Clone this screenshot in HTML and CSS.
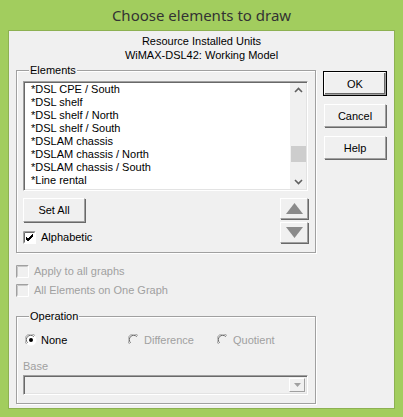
FILE: index.html
```html
<!DOCTYPE html>
<html>
<head>
  <title>Choose elements to draw</title>
  <link rel="stylesheet" href="styles.css">
</head>
<body>
  <div class="window">
    <div class="titlebar">Choose elements to draw</div>
    <div class="client">
      <div class="header">
        <div>Resource Installed Units</div>
        <div>WiMAX-DSL42: Working Model</div>
      </div>

      <div class="main">
        <div class="left">
          <fieldset class="group elements">
            <legend>Elements</legend>
            <div class="listbox">
              <ul class="items">
                <li>*DSL CPE / South</li>
                <li>*DSL shelf</li>
                <li>*DSL shelf / North</li>
                <li>*DSL shelf / South</li>
                <li>*DSLAM chassis</li>
                <li>*DSLAM chassis / North</li>
                <li>*DSLAM chassis / South</li>
                <li>*Line rental</li>
              </ul>
              <div class="scrollbar">
                <svg class="chev" width="15" height="14" viewBox="0 0 15 14"><path d="M4 8 L7.5 4.5 L11 8" fill="none" stroke="#606060" stroke-width="1.6"/></svg>
                <div class="track"><div class="thumb"></div></div>
                <svg class="chev" width="15" height="14" viewBox="0 0 15 14"><path d="M4 5 L7.5 8.5 L11 5" fill="none" stroke="#606060" stroke-width="1.6"/></svg>
              </div>
            </div>

            <div class="list-actions">
              <div class="actions-left">
                <button class="btn setall">Set All</button>
                <label class="check">
                  <svg class="box" width="13" height="13" viewBox="0 0 13 13">
                    <rect x="0" y="0" width="13" height="13" fill="#fff"/>
                    <path d="M0.5 12.5 V0.5 H12.5" fill="none" stroke="#a0a0a0"/>
                    <path d="M1.5 11.5 V1.5 H11.5" fill="none" stroke="#696969"/>
                    <path d="M1.5 12.5 H12.5 V0.5" fill="none" stroke="#fff"/>
                    <path d="M3 6 L5 8 L10 3 M3 7 L5 9 L10 4 M3 8 L5 10 L10 5" fill="none" stroke="#000"/>
                  </svg>
                  <span>Alphabetic</span>
                </label>
              </div>
              <div class="movers">
                <button class="btn mover">
                  <svg width="17" height="12" viewBox="0 0 17 12"><polygon points="8.5,0 17,11 0,11" fill="#8a8a8a"/></svg>
                </button>
                <button class="btn mover">
                  <svg width="17" height="12" viewBox="0 0 17 12"><polygon points="0,0 17,0 8.5,11" fill="#8a8a8a"/></svg>
                </button>
              </div>
            </div>
          </fieldset>

          <label class="check disabled first">
            <svg class="box" width="13" height="13" viewBox="0 0 13 13">
              <rect x="0" y="0" width="13" height="13" fill="#f0f0f0"/>
              <path d="M0.5 12.5 V0.5 H12.5" fill="none" stroke="#a0a0a0"/>
              <path d="M1.5 11.5 V1.5 H11.5" fill="none" stroke="#c8c8c8"/>
              <path d="M1.5 12.5 H12.5 V0.5" fill="none" stroke="#fff"/>
            </svg>
            <span>Apply to all graphs</span>
          </label>
          <label class="check disabled">
            <svg class="box" width="13" height="13" viewBox="0 0 13 13">
              <rect x="0" y="0" width="13" height="13" fill="#f0f0f0"/>
              <path d="M0.5 12.5 V0.5 H12.5" fill="none" stroke="#a0a0a0"/>
              <path d="M1.5 11.5 V1.5 H11.5" fill="none" stroke="#c8c8c8"/>
              <path d="M1.5 12.5 H12.5 V0.5" fill="none" stroke="#fff"/>
            </svg>
            <span>All Elements on One Graph</span>
          </label>

          <fieldset class="group operation">
            <legend>Operation</legend>
            <div class="radios">
              <label class="radio r-none">
                <svg width="12" height="12" viewBox="0 0 12 12">
                  <circle cx="6" cy="6" r="5.5" fill="#fff"/>
                  <path d="M1.6 10 A5.5 5.5 0 0 1 10 1.6" fill="none" stroke="#a0a0a0"/>
                  <path d="M2.6 8.8 A4.3 4.3 0 0 1 8.8 2.6" fill="none" stroke="#696969"/>
                  <circle cx="6" cy="6" r="2" fill="#000"/>
                </svg>
                <span>None</span>
              </label>
              <label class="radio disabled r-diff">
                <svg width="12" height="12" viewBox="0 0 12 12">
                  <circle cx="6" cy="6" r="5.5" fill="#f0f0f0"/>
                  <path d="M1.6 10 A5.5 5.5 0 0 1 10 1.6" fill="none" stroke="#a0a0a0"/>
                  <path d="M2.6 8.8 A4.3 4.3 0 0 1 8.8 2.6" fill="none" stroke="#696969"/>
                </svg>
                <span>Difference</span>
              </label>
              <label class="radio disabled">
                <svg width="12" height="12" viewBox="0 0 12 12">
                  <circle cx="6" cy="6" r="5.5" fill="#f0f0f0"/>
                  <path d="M1.6 10 A5.5 5.5 0 0 1 10 1.6" fill="none" stroke="#a0a0a0"/>
                  <path d="M2.6 8.8 A4.3 4.3 0 0 1 8.8 2.6" fill="none" stroke="#696969"/>
                </svg>
                <span>Quotient</span>
              </label>
            </div>
            <div class="base-label">Base</div>
            <div class="combo">
              <div class="combo-btn">
                <svg width="7" height="4" viewBox="0 0 7 4"><polygon points="0,0 7,0 3.5,4" fill="#a0a0a0"/></svg>
              </div>
            </div>
          </fieldset>
        </div>

        <div class="right">
          <button class="btn default">OK</button>
          <button class="btn">Cancel</button>
          <button class="btn">Help</button>
        </div>
      </div>
    </div>
  </div>
</body>
</html>
```

FILE: styles.css
```css
/* dialog frame */

body {
  margin: 0;
  background: #a2cd5e;
}

.window {
  width: 403px;
  height: 417px;
  background: #a2cd5e;
  font-family: "Liberation Sans", Arial, sans-serif;
  font-size: 11px;
  color: #000;
}

.titlebar {
  height: 30px;
  line-height: 30px;
  text-align: center;
  font-family: "Noto Sans", "Open Sans", sans-serif;
  font-size: 15px;
  color: #333;
}

.client {
  box-sizing: border-box;
  margin: 0 8px;
  height: 379px;
  background: #f0f0f0;
  border: 1px solid #8db152;
}

.header {
  margin-top: 3px;
  text-align: center;
  line-height: 14px;
}

.main {
  display: flex;
  gap: 8px;
  margin-left: 7px;
  margin-top: 1px;
}

.left {
  width: 300px;
}

.right {
  width: 63px;
  margin-top: 9px;
  display: flex;
  flex-direction: column;
  gap: 9px;
}

/* group boxes */

.group {
  margin: 0;
  min-inline-size: 0;
  border: 1px solid #a0a0a0;
  box-shadow: inset 1px 1px 0 #fff, 1px 1px 0 #fff;
}

.group legend {
  padding: 0 1px;
  margin-left: 6px;
  line-height: 14px;
  background: #f0f0f0;
}

.elements {
  padding: 4px 7px 8px 6px;
}

.operation {
  margin-top: 12px;
  padding: 11px 7px 8px 6px;
}

/* list */

.listbox {
  display: flex;
  height: 110px;
  box-sizing: border-box;
  background: #fff;
  border: 1px solid;
  border-color: #a0a0a0 #fff #fff #a0a0a0;
  box-shadow: inset 1px 1px 0 #696969, inset -1px -1px 0 #e3e3e3;
  overflow: hidden;
}

.items {
  flex: 1;
  list-style: none;
  margin: 0;
  padding: 1px 0 0 7px;
  line-height: 13px;
}

.scrollbar {
  width: 16px;
  margin: 1px 1px 1px 0;
  background: #f0f0f0;
  display: flex;
  flex-direction: column;
  align-items: center;
}

.chev {
  display: block;
  margin-top: 1px;
}

.track {
  flex: 1;
  width: 15px;
  position: relative;
}

.thumb {
  position: absolute;
  top: 48px;
  left: 0;
  width: 15px;
  height: 16px;
  background: #cdcdcd;
}

/* buttons */

.btn {
  box-sizing: border-box;
  margin: 0;
  padding: 0;
  height: 24px;
  background: #f0f0f0;
  font-family: "Liberation Sans", Arial, sans-serif;
  font-size: 11px;
  color: #000;
  border: 1px solid;
  border-color: #fff #a0a0a0 #a0a0a0 #fff;
  box-shadow: 1px 1px 0 #696969;
  border-radius: 0;
}

.right .btn {
  width: 62px;
  height: 23px;
}

.btn.default {
  outline: 1px solid #000;
  outline-offset: 0;
  box-shadow: inset -1px -1px 0 #696969;
}

.list-actions {
  display: flex;
  justify-content: space-between;
  margin-top: 7px;
}

.setall {
  width: 62px;
}

.movers {
  display: flex;
  flex-direction: column;
  gap: 3px;
}

.mover {
  width: 28px;
  height: 21px;
  display: flex;
  align-items: center;
  justify-content: center;
}

.mover svg {
  display: block;
}

/* checkboxes and radios */

.check {
  display: flex;
  align-items: center;
  gap: 5px;
  height: 13px;
  line-height: 13px;
}

.check .box {
  display: block;
  flex: none;
}

.actions-left .check {
  margin-top: 9px;
}

.disabled {
  color: #a0a0a0;
}

.check.first {
  margin-top: 12px;
  margin-bottom: 6px;
}

.radios {
  display: flex;
  margin-left: 2px;
  height: 12px;
}

.radio {
  display: flex;
  align-items: center;
  gap: 4px;
  line-height: 12px;
}

.radio svg {
  display: block;
  flex: none;
}

.r-none {
  width: 103px;
}

.r-diff {
  width: 89px;
}

.base-label {
  margin-top: 14px;
  line-height: 13px;
  color: #a0a0a0;
}

.combo {
  box-sizing: border-box;
  margin-top: 2px;
  height: 20px;
  width: 285px;
  border: 1px solid;
  border-color: #a0a0a0 #fff #fff #a0a0a0;
  box-shadow: inset 1px 1px 0 #696969, inset -1px -1px 0 #e3e3e3;
  display: flex;
  justify-content: flex-end;
  padding: 2px;
}

.combo-btn {
  box-sizing: border-box;
  width: 16px;
  border: 1px solid;
  border-color: #fff #a0a0a0 #a0a0a0 #fff;
  display: flex;
  align-items: center;
  justify-content: center;
}
```
